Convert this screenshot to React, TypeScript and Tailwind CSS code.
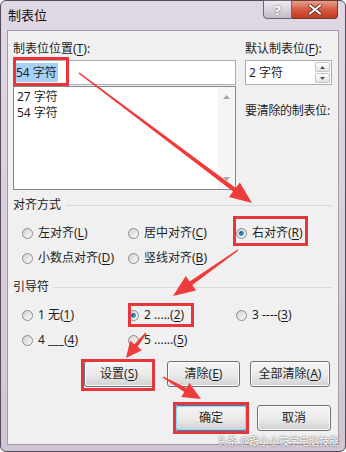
import React from 'react';

const FONT = "font-['Noto_Sans','Noto_Sans_CJK_SC',sans-serif]";

type Pt = [number, number];

// tapered arrow polygon from (x1,y1) to the tip (x2,y2)
const arrowPoints = (x1: number, y1: number, x2: number, y2: number, w1: number, w2: number, hl: number, hw: number) => {
    const L = Math.hypot(x2 - x1, y2 - y1);
    const ux = (x2 - x1) / L;
    const uy = (y2 - y1) / L;
    const nx = -uy;
    const ny = ux;
    const bx = x2 - ux * hl;
    const by = y2 - uy * hl;
    const pts: Pt[] = [
        [x1 + (nx * w1) / 2, y1 + (ny * w1) / 2],
        [bx + (nx * w2) / 2, by + (ny * w2) / 2],
        [bx + (nx * hw) / 2, by + (ny * hw) / 2],
        [x2, y2],
        [bx - (nx * hw) / 2, by - (ny * hw) / 2],
        [bx - (nx * w2) / 2, by - (ny * w2) / 2],
        [x1 - (nx * w1) / 2, y1 - (ny * w1) / 2],
    ];
    return pts.map((p) => p.map((v) => v.toFixed(1)).join(',')).join(' ');
};

const Radio = ({ checked = false }: { checked?: boolean }) => (
    <span className="w-[11px] h-[11px] shrink-0 rounded-full border border-[#8c8c8c] bg-linear-to-br from-[#d0d0d0] to-[#fbfbfb] flex items-center justify-center">
        {checked && <span className="w-[5px] h-[5px] rounded-full bg-linear-to-br from-[#0b3f7a] to-[#5cc0f2]" />}
    </span>
);

const Option = ({ label, checked, width }: { label: React.ReactNode; checked?: boolean; width?: string }) => (
    <div className={`flex items-center gap-[5px] h-[20px] ${width ?? ''}`}>
        <Radio checked={checked} />
        <span className="whitespace-nowrap">{label}</span>
    </div>
);

const U = ({ c }: { c: string }) => <span className="underline underline-offset-2">{c}</span>;

const Btn = ({ children, width, primary }: { children: React.ReactNode; width: string; primary?: boolean }) => (
    <div
        className={`${width} h-[26px] rounded-[3px] border flex items-center justify-center bg-linear-to-b from-[#f4f4f4] via-[#ebebeb] to-[#d2d2d2] ${
            primary
                ? 'border-[#3c7fb1] shadow-[inset_0_0_0_1px_#8fdcf7]'
                : 'border-[#707070] shadow-[inset_0_0_0_1px_#fcfcfc]'
        }`}
    >
        {children}
    </div>
);

const GroupLabel = ({ text }: { text: string }) => (
    <div className="flex items-center h-[16px] pl-[5px] pr-[6px]">
        <span className="text-[#1a1a1a]">{text}</span>
        <div className="flex-1 h-px bg-[#d8d8d8] ml-[5px]" />
    </div>
);

export default function App() {
    return (
        <div className={`relative w-[346px] h-[452px] overflow-hidden bg-white ${FONT} text-[12px] leading-[16px] text-[#1e1e1e]`}>
            <div className="w-full h-full flex flex-col rounded-[6px] border border-[#54495a] bg-linear-to-b from-[#e0d9e3] to-[#d0c5d5] px-[6px] pb-[6px]">
                {/* title bar */}
                <div className="h-[29px] flex items-start justify-between">
                    <span className="pt-[6px] pl-[1px] text-[13px] text-[#111]">制表位</span>
                    <div className="flex -mt-px mr-px">
                        <div className="w-[29px] h-[19px] rounded-bl-[4px] border border-[#6d6472] bg-linear-to-b from-[#eeeaf0] to-[#c4bcc8] flex items-center justify-center text-[13px] font-bold text-white [text-shadow:0_0_2px_#555]">
                            ?
                        </div>
                        <div className="w-[46px] h-[19px] rounded-br-[4px] border border-l-0 border-[#6d3a32] bg-linear-to-b from-[#e6a08f] via-[#d45a40] to-[#c23a20] flex items-center justify-center">
                            <svg width="14" height="11" viewBox="0 0 14 11">
                                <path d="M2 1.5 L12 9.5 M12 1.5 L2 9.5" stroke="#5a2218" strokeWidth="3.6" strokeLinecap="round" />
                                <path d="M2 1.5 L12 9.5 M12 1.5 L2 9.5" stroke="#ffffff" strokeWidth="2.2" strokeLinecap="round" />
                            </svg>
                        </div>
                    </div>
                </div>

                {/* client area */}
                <div className="flex-1 border border-[#a59aab] bg-[#f0f0f0] flex flex-col">
                    <div className="flex pt-[10px] pl-[5px]">
                        <div className="w-[223px] flex flex-col">
                            <span>
                                制表位位置(<U c="T" />):
                            </span>
                            <div className="mt-[3px] h-[25px] border border-[#abadb3] bg-white flex items-center pl-[1px]">
                                <span className="bg-[#a6d0f4] px-[1px] leading-[19px]">54 字符</span>
                            </div>
                            <div className="mt-px h-[104px] border border-[#828790] bg-white flex">
                                <div className="flex-1 flex flex-col pl-[3px] pt-[2px]">
                                    <span>27 字符</span>
                                    <span>54 字符</span>
                                </div>
                                <div className="w-[17px] bg-[#f5f5f5] flex flex-col items-center justify-between pt-[8px] pb-[8px]">
                                    <svg width="7" height="4" viewBox="0 0 7 4">
                                        <path d="M0 4 L3.5 0 L7 4 Z" fill="#a8a8a8" />
                                    </svg>
                                    <svg width="7" height="4" viewBox="0 0 7 4">
                                        <path d="M0 0 L3.5 4 L7 0 Z" fill="#a8a8a8" />
                                    </svg>
                                </div>
                            </div>
                        </div>

                        <div className="ml-[9px] w-[87px] flex flex-col">
                            <span className="whitespace-nowrap">
                                默认制表位(<U c="F" />):
                            </span>
                            <div className="mt-[3px] h-[25px] border border-[#abadb3] bg-white flex items-center">
                                <span className="flex-1 pl-[3px]">2 字符</span>
                                <div className="w-[15px] mr-px flex flex-col gap-px">
                                    <div className="h-[10px] rounded-[2px] border border-[#c4c4c4] bg-linear-to-b from-white to-[#e2e2e2] flex items-center justify-center">
                                        <svg width="5" height="3" viewBox="0 0 5 3">
                                            <path d="M0 3 L2.5 0 L5 3 Z" fill="#555" />
                                        </svg>
                                    </div>
                                    <div className="h-[10px] rounded-[2px] border border-[#c4c4c4] bg-linear-to-b from-white to-[#e2e2e2] flex items-center justify-center">
                                        <svg width="5" height="3" viewBox="0 0 5 3">
                                            <path d="M0 0 L2.5 3 L5 0 Z" fill="#555" />
                                        </svg>
                                    </div>
                                </div>
                            </div>
                            <span className="mt-[18px] whitespace-nowrap tracking-[-0.3px]">要清除的制表位:</span>
                        </div>
                    </div>

                    {/* alignment */}
                    <div className="mt-[7px]">
                        <GroupLabel text="对齐方式" />
                    </div>
                    <div className="mt-[10px] pl-[14px] flex flex-col gap-[5px]">
                        <div className="flex">
                            <Option width="w-[106px]" label={<>左对齐(<U c="L" />)</>} />
                            <Option width="w-[108px]" label={<>居中对齐(<U c="C" />)</>} />
                            <Option checked label={<>右对齐(<U c="R" />)</>} />
                        </div>
                        <div className="flex">
                            <Option width="w-[106px]" label={<>小数点对齐(<U c="D" />)</>} />
                            <Option label={<>竖线对齐(<U c="B" />)</>} />
                        </div>
                    </div>

                    {/* leader */}
                    <div className="mt-[11px]">
                        <GroupLabel text="引导符" />
                    </div>
                    <div className="mt-[10px] pl-[14px] flex flex-col gap-[5px]">
                        <div className="flex">
                            <Option width="w-[106px]" label={<>1 无(<U c="1" />)</>} />
                            <Option width="w-[108px]" checked label={<>2 .....(<U c="2" />)</>} />
                            <Option label={<>3 ----(<U c="3" />)</>} />
                        </div>
                        <div className="flex">
                            <Option width="w-[106px]" label={<>4 ___(<U c="4" />)</>} />
                            <Option label={<>5 ......(<U c="5" />)</>} />
                        </div>
                    </div>

                    {/* buttons */}
                    <div className="mt-[11px] pl-[76px] flex">
                        <Btn width="w-[70px]">
                            设置(<U c="S" />)
                        </Btn>
                        <div className="ml-[13px]">
                            <Btn width="w-[73px]">
                                清除(<U c="E" />)
                            </Btn>
                        </div>
                        <div className="ml-[10px]">
                            <Btn width="w-[80px]">
                                全部清除(<U c="A" />)
                            </Btn>
                        </div>
                    </div>
                    <div className="mt-[18px] pl-[167px] flex">
                        <Btn width="w-[72px]" primary>
                            确定
                        </Btn>
                        <div className="ml-[10px]">
                            <Btn width="w-[74px]">取消</Btn>
                        </div>
                    </div>
                </div>
            </div>

            {/* annotations */}
            <svg className="absolute left-0 top-0 pointer-events-none" width="346" height="452" viewBox="0 0 346 452">
                <g fill="none" stroke="#e8353a" strokeWidth="3">
                    <rect x="14.5" y="58.5" width="53" height="26" />
                    <rect x="234.5" y="217.5" width="72" height="27" />
                    <rect x="129.5" y="304.5" width="63" height="21" />
                    <rect x="82.5" y="360.5" width="71" height="29" />
                    <rect x="174.5" y="403.5" width="73" height="29" />
                </g>
                <g fill="#ee3b3b">
                    <polygon points={arrowPoints(79, 73, 252, 203, 1.5, 4.5, 22, 18)} />
                    <polygon points={arrowPoints(238, 250, 173, 296, 1.5, 4.5, 22, 18)} />
                    <polygon points={arrowPoints(146, 333, 126, 358, 1.5, 4, 16, 15)} />
                    <polygon points={arrowPoints(163, 377, 201, 399, 1.5, 4.5, 18, 16)} />
                </g>
            </svg>

            <span className="absolute right-[7px] bottom-[5px] text-[10px] leading-[12px] text-white [text-shadow:0_0_2px_#333]">
                头条 @跟小小筱学电脑技能
            </span>
        </div>
    );
}
